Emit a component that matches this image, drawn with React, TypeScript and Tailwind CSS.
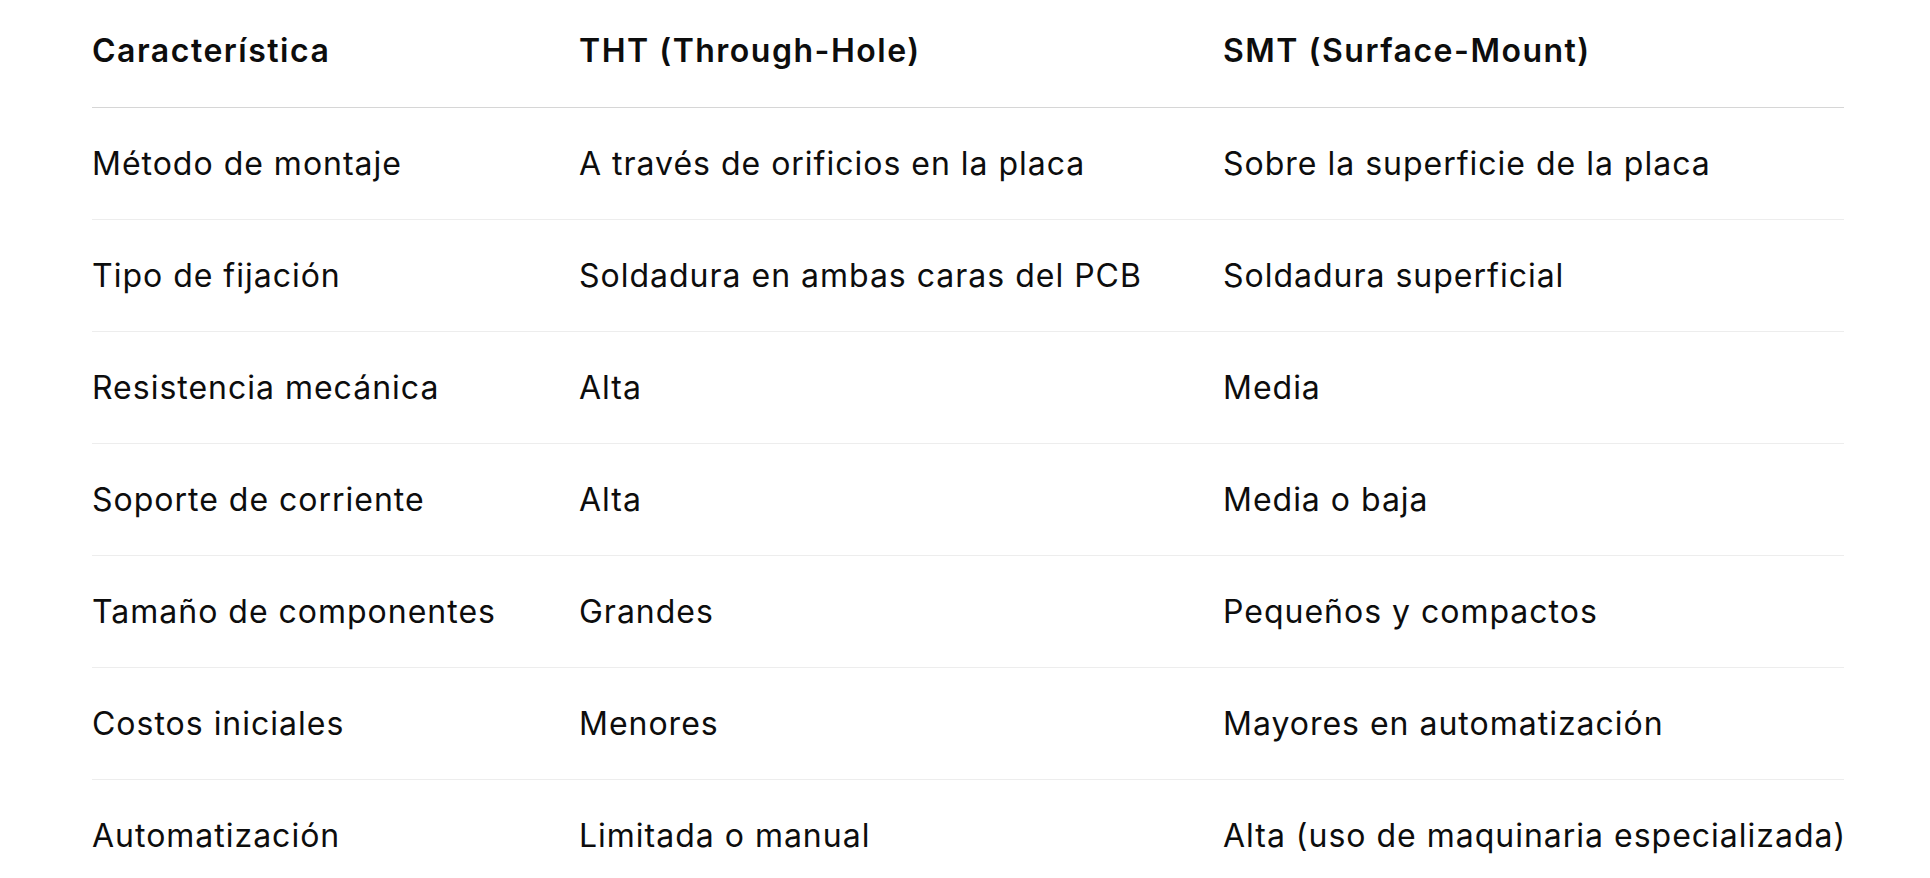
import React from 'react';

interface Row {
    feature: string;
    tht: string;
    smt: string;
}

const rows: Row[] = [
    {feature: "Método de montaje", tht: "A través de orificios en la placa", smt: "Sobre la superficie de la placa"},
    {feature: "Tipo de fijación", tht: "Soldadura en ambas caras del PCB", smt: "Soldadura superficial"},
    {feature: "Resistencia mecánica", tht: "Alta", smt: "Media"},
    {feature: "Soporte de corriente", tht: "Alta", smt: "Media o baja"},
    {feature: "Tamaño de componentes", tht: "Grandes", smt: "Pequeños y compactos"},
    {feature: "Costos iniciales", tht: "Menores", smt: "Mayores en automatización"},
    {feature: "Automatización", tht: "Limitada o manual", smt: "Alta (uso de maquinaria especializada)"},
];

const cols = "grid grid-cols-[487px_644px_621px] items-center whitespace-nowrap";

const App = () => {
    return (
        <div className="w-[1930px] h-[878px] overflow-hidden bg-white text-[#0d0d0d] font-['Inter','Noto_Sans',sans-serif]">
            <div className="ml-[92px] w-[1752px]">
                <div className={`${cols} h-[108px] pb-[5px] border-b border-[#d6d6d6] text-[32px] font-semibold tracking-[0.047em]`}>
                    <div>Característica</div>
                    <div>THT (Through-Hole)</div>
                    <div>SMT (Surface-Mount)</div>
                </div>
                {rows.map((row: Row, index: number) => (
                    <div key={index} className={`${cols} h-[112px] border-b border-[#ededed] text-[32px] tracking-[0.031em]`}>
                        <div>{row.feature}</div>
                        <div>{row.tht}</div>
                        <div>{row.smt}</div>
                    </div>
                ))}
            </div>
        </div>
    );
};

export default App;
